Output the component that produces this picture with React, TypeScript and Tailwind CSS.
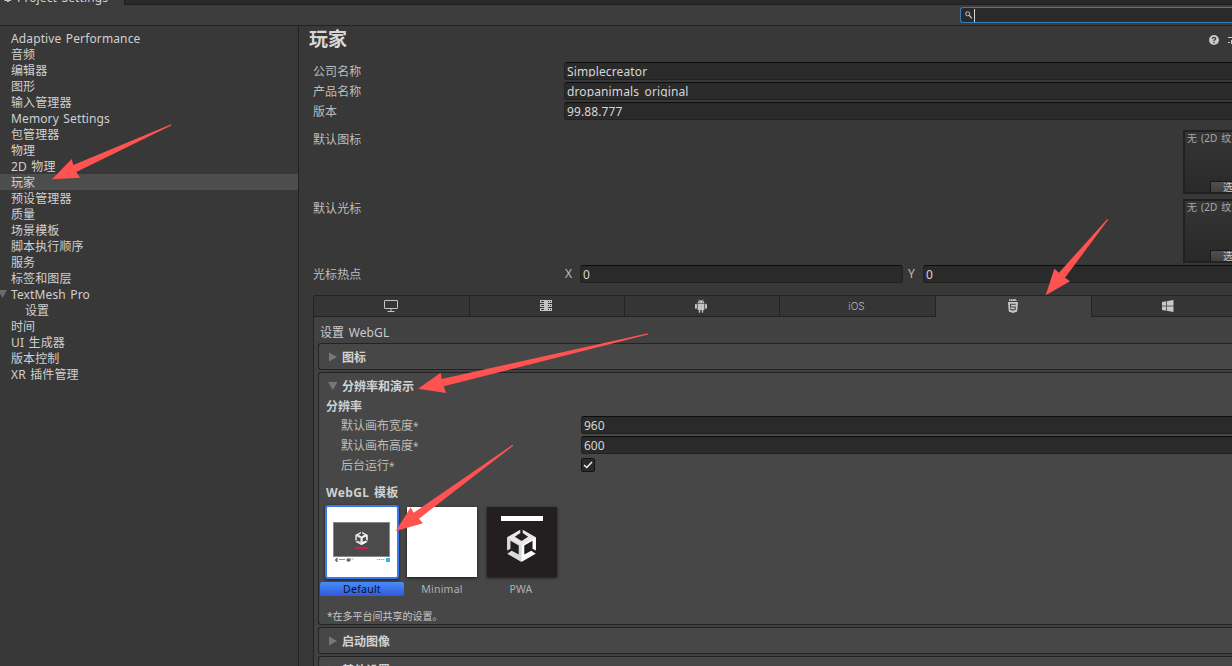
import React from "react";

const sidebarItems: { label: string; indent?: boolean; open?: boolean; selected?: boolean }[] = [
  { label: "Adaptive Performance" },
  { label: "音频" },
  { label: "编辑器" },
  { label: "图形" },
  { label: "输入管理器" },
  { label: "Memory Settings" },
  { label: "包管理器" },
  { label: "物理" },
  { label: "2D 物理" },
  { label: "玩家", selected: true },
  { label: "预设管理器" },
  { label: "质量" },
  { label: "场景模板" },
  { label: "脚本执行顺序" },
  { label: "服务" },
  { label: "标签和图层" },
  { label: "TextMesh Pro", open: true },
  { label: "设置", indent: true },
  { label: "时间" },
  { label: "UI 生成器" },
  { label: "版本控制" },
  { label: "XR 插件管理" },
];

function Sidebar() {
  return (
    <nav className="w-[299px] shrink-0 border-r border-[#232323] pt-1">
      {sidebarItems.map((item) => (
        <div
          key={item.label}
          className={`flex h-4 items-start whitespace-nowrap text-[#d0d0d0] ${item.selected ? "bg-[#4d4d4d]" : ""} ${item.indent ? "pl-[25px]" : ""}`}
        >
          {!item.indent && (
            <span className="flex w-[11px] shrink-0 pt-1">
              {item.open && (
                <svg width="8" height="8" viewBox="0 0 8 8" fill="#6c6c6c">
                  <path d="M-2 0H7L2.5 8Z" />
                </svg>
              )}
            </span>
          )}
          <span className="leading-[18px]">{item.label}</span>
        </div>
      ))}
    </nav>
  );
}

function Field({ value, className = "" }: { value: string; className?: string }) {
  return (
    <div className={`h-[18px] rounded-[3px] border border-[#212121] border-t-[#0d0d0d] bg-[#2a2a2a] pl-0.5 ${className}`}>
      <div className="h-[14px] overflow-hidden whitespace-nowrap leading-[17px] text-[#d6d6d6]">{value}</div>
    </div>
  );
}

function Row({ label, value }: { label: string; value: string }) {
  return (
    <div className="flex h-[18px]">
      <span className="w-[251px] shrink-0 leading-[20px]">{label}</span>
      <Field value={value} className="grow rounded-r-none border-r-0" />
    </div>
  );
}

function TextureRow({ label }: { label: string }) {
  return (
    <div className="flex h-16 justify-between">
      <span className="h-[18px] leading-[20px]">{label}</span>
      <div className="flex w-[49px] flex-col justify-between overflow-hidden border-2 border-r-0 border-[#212121] bg-linear-to-b from-[#353535] to-[#292929] pl-[2px] text-[10px]">
        <span className="whitespace-nowrap leading-3 text-[#a8a8a8]">无 (2D 纹理)</span>
        <span className="ml-[23px] h-[11px] overflow-hidden whitespace-nowrap rounded-tl-[2px] border-l border-t border-[#181818] bg-linear-to-b from-[#505050] to-[#404040] pl-3 leading-[11px] text-[#c4c4c4]">
          选择
        </span>
      </div>
    </div>
  );
}

function MonitorIcon() {
  return (
    <svg width="14" height="12" viewBox="0 0 14 12" fill="none" stroke="#c4c4c4">
      <rect x="0.5" y="0.5" width="13" height="8" rx="0.5" />
      <path d="M7 9V11M3.5 11.5H10.5" />
    </svg>
  );
}

function ServerIcon() {
  return (
    <svg width="12" height="12" viewBox="0 0 12 12" fill="#c4c4c4" shapeRendering="crispEdges">
      <path d="M0 0H12V3H0ZM0 4H12V7H0ZM0 8H12V11H0ZM4 3H8V8H4Z" />
      <path d="M1 1H4V2H1ZM8 1H9V2H8ZM10 1H11V2H10ZM1 5H4V6H1ZM8 5H9V6H8ZM10 5H11V6H10ZM1 9H4V10H1ZM8 9H9V10H8ZM10 9H11V10H10Z" fill="#353535" />
    </svg>
  );
}

function AndroidIcon() {
  return (
    <svg width="12" height="14" viewBox="0 0 12 14" fill="#c4c4c4">
      <path d="M2.6 4.3C2.7 2.8 3.4 2 4.2 1.6L3.5 .4L3.9 .2L4.6 1.4Q6 1 7.4 1.4L8.1 .2L8.5 .4L7.8 1.6C8.6 2 9.3 2.8 9.4 4.3Z" />
      <path d="M2.6 4.8H9.4V11H8.2V13.4Q7.5 14.3 6.8 13.4V11H5.2V13.4Q4.5 14.3 3.8 13.4V11H2.6Z" />
      <rect x="0" y="4.8" width="1.9" height="5" rx=".9" />
      <rect x="10.1" y="4.8" width="1.9" height="5" rx=".9" />
      <path d="M4.1 2.6H4.9V3.4H4.1ZM7.1 2.6H7.9V3.4H7.1Z" fill="#353535" />
    </svg>
  );
}

function Html5Icon() {
  return (
    <svg width="10" height="14" viewBox="0 0 10 14">
      <path d="M1 0H2V.8H3V0H4V.8H4.6V0H7V.7L7.5 0H8V1.2H9V2H1Z" fill="#b4b4b4" />
      <path d="M0 3H10L9.2 12.4L5 14L.8 12.4Z" fill="#c8c8c8" />
      <path d="M7.8 5.2H2.6V8H7.2V10.4L5 11.1L2.6 10.4V9.4" fill="none" stroke="#414141" strokeWidth="1.1" />
    </svg>
  );
}

function WindowsIcon() {
  return (
    <svg width="12" height="12" viewBox="0 0 12 12">
      <path d="M0 2L11.5 0V12L0 10Z" fill="#c8c8c8" />
      <path d="M0 6H12M4.5 0V12" stroke="#454545" strokeWidth="0.8" />
    </svg>
  );
}

const platforms = [
  { id: "desktop", icon: <MonitorIcon />, width: "w-[156px]" },
  { id: "server", icon: <ServerIcon />, width: "w-[155px]" },
  { id: "android", icon: <AndroidIcon />, width: "w-[155px]" },
  { id: "ios", icon: <span className="font-['Inter'] text-[10px] font-light leading-[14px] text-[#b8b8b8]">iOS</span>, width: "w-[156px]" },
  { id: "webgl", icon: <Html5Icon />, width: "w-[156px]" },
  { id: "windows", icon: <WindowsIcon />, width: "w-[154px]" },
];

function PlatformTabs() {
  return (
    <div className="flex h-[22px] w-[932px] shrink-0 bg-[#414141]">
      {platforms.map((p) => (
        <div
          key={p.id}
          className={`flex h-[22px] shrink-0 items-center justify-center border-l border-t border-[#232323] pr-[2px] ${p.width} ${
            p.id === "webgl" ? "bg-[#414141] pb-px" : "border-b bg-[#353535]"
          } ${p.id === "desktop" ? "rounded-tl-[3px]" : ""}`}
        >
          {p.icon}
        </div>
      ))}
    </div>
  );
}

function SectionHeader({ title, open = false }: { title: string; open?: boolean }) {
  return (
    <div className="flex h-[26px] items-center pl-[9px] font-bold text-[#d2d2d2]">
      <svg width="10" height="10" viewBox="0 0 10 10" fill="#777777">
        {open ? <path d="M0 1H9.5L4.8 9Z" /> : <path d="M1 .5L9 5L1 9.5Z" />}
      </svg>
      <span className="ml-1 pt-[2px] leading-4 tracking-normal">{title}</span>
    </div>
  );
}

function UnityMark({ size, dark }: { size: number; dark: string }) {
  return (
    <svg width={size} height={size * 1.12} viewBox="0 0 30 34">
      <path d="M15 1L29 9V25L15 33L1 25V9Z" fill="#e8e8e8" />
      <path d="M15 17L29 9V25L15 33Z" fill="#fff" />
      <path d="M15 17L1 9V25L15 33Z" fill="#dadada" />
      <path d="M13.8 0H16.2V5L21.5 8.6L15 12.8L8.5 8.6L13.8 5Z" fill={dark} />
      <path d="M0 25.5V22.6L4.2 20.4V12.6L12.3 17.2V26L5.4 22.2L1.5 25Z" fill={dark} />
      <path d="M30 25.5V22.6L25.8 20.4V12.6L17.7 17.2V26L24.6 22.2L28.5 25Z" fill={dark} />
    </svg>
  );
}

function Templates() {
  return (
    <div className="flex h-[93px] pl-px text-[10.5px] tracking-[0.25px] text-[#b0b0b0]">
      <div className="flex w-[84px] flex-col items-center">
        <div className="flex h-[74px] w-[74px] flex-col items-center rounded-[3px] border-2 border-[#3b78ee] bg-white pr-px pt-[15px] shadow-[0_1px_3px_#1a1a1a]">
          <div className="flex h-[35px] w-[57px] flex-col items-center border border-[#888] bg-[#4b4b4b] pt-2">
            <UnityMark size={13} dark="#4b4b4b" />
            <div className="mt-px h-[2px] w-[13px] shrink-0 bg-[#d3175c]" />
          </div>
          <svg width="56" height="6" viewBox="0 0 56 6">
            <path d="M1 3L3 1V5ZM3 1V5M5 2.5H11" fill="#666" stroke="#777" strokeWidth=".8" />
            <ellipse cx="14.5" cy="3" rx="2.2" ry="1.8" fill="#666" />
            <path d="M16 2H20M43 2.5H51" stroke="#a8a8a8" strokeDasharray="1.5 .5" />
            <rect x="52" y="1" width="4" height="4" fill="#30b8e0" />
          </svg>
        </div>
        <div className="mt-[3px] h-[14px] w-full rounded-[2px] bg-linear-to-b from-[#498cf7] to-[#3159df] text-center leading-[15px] text-[#101010]">
          Default
        </div>
      </div>
      <div className="ml-[3px] flex w-[70px] flex-col items-center pt-[2px]">
        <div className="h-[70px] w-[70px] bg-white shadow-[0_1px_3px_#1a1a1a]" />
        <span className="mt-[5px] leading-[15px]">Minimal</span>
      </div>
      <div className="ml-[10px] flex w-[70px] flex-col items-center pt-[2px]">
        <div className="flex h-[70px] w-[70px] flex-col items-center bg-[#231f20] pr-px pt-[9px] shadow-[0_1px_3px_#1a1a1a]">
          <div className="h-[5px] w-[42px] shrink-0 bg-white" />
          <div className="mt-[7px]">
            <UnityMark size={31} dark="#231f20" />
          </div>
        </div>
        <span className="mt-[5px] pr-[2px] leading-[15px]">PWA</span>
      </div>
    </div>
  );
}

function ResolutionSection() {
  return (
    <section className="h-[253px] shrink-0 rounded-l-[3px] border border-r-0 border-[#232323] bg-[#474747]">
      <SectionHeader title="分辨率和演示" open />
      <div className="h-[14px] pl-[7px] font-bold leading-[16px] tracking-normal text-[#d0d0d0]">分辨率</div>
      <div className="flex flex-col gap-[2px] pl-[22px] pt-[3px] tracking-normal">
        {[
          ["默认画布宽度", "960"],
          ["默认画布高度", "600"],
        ].map(([label, value]) => (
          <div key={label} className="flex h-[18px]">
            <span className="w-[240px] shrink-0 leading-[20px]">
              {label}
              <span className="text-[10px]">*</span>
            </span>
            <Field value={value} className="grow rounded-r-none border-r-0" />
          </div>
        ))}
        <div className="flex h-[18px] items-center">
          <span className="h-[18px] w-[240px] shrink-0 leading-[20px]">
            后台运行<span className="text-[10px]">*</span>
          </span>
          <span className="flex h-[14px] w-[14px] items-center justify-center rounded-[2px] border border-[#141414] bg-[#2a2a2a]">
            <svg width="10" height="8" viewBox="0 0 10 8" fill="none" stroke="#eeeeee" strokeWidth="1.5">
              <path d="M1 4L3.7 6.5L9 1" />
            </svg>
          </span>
        </div>
      </div>
      <div className="mb-1 mt-[9px] h-[18px] pl-[7px] font-bold leading-[19px] tracking-[0.35px] text-[#d0d0d0]">WebGL 模板</div>
      <Templates />
      <div className="pl-2 pt-[9px] text-[10px] leading-[18px] tracking-normal text-[#c8c8c8]">*在多平台间共享的设置。</div>
    </section>
  );
}

function Arrows() {
  return (
    <svg className="pointer-events-none absolute left-0 top-0" width="1232" height="666" viewBox="0 0 1232 666" fill="#ff5352">
      <path d="M52 179.3L71.7 159L73.3 165L171.2 124.3V125.5L76.3 172L80 177.7Z" />
      <path d="M1045.7 295.3L1054.3 268.7L1059 272.7L1107.3 219L1108.3 219.6L1065 277.7L1070 281.3Z" />
      <path d="M418 388.7L440.7 372.7L441.7 379L648 333.2V334.6L443.7 386.3L446 393Z" />
      <path d="M395.7 531L410.7 507.3L413.7 512.7L512.4 444.8L513.2 445.8L419 518.7L423 523.3Z" />
    </svg>
  );
}

function SearchBar() {
  return (
    <div className="flex h-[21px] shrink-0 items-center justify-end border-b border-[#232323] bg-[#3c3c3c] pb-[1px]">
      <div className="mt-px flex h-4 w-[272px] items-center rounded-l-[3px] border border-r-0 border-[#3a79bb] bg-[#2a2a2a] pl-1">
        <svg width="7" height="8" viewBox="0 0 7 8" fill="none" stroke="#c4c4c4">
          <circle cx="2.7" cy="2.8" r="2" />
          <path d="M4.2 4.4L6.8 7.2" strokeWidth="1.3" />
        </svg>
        <span className="ml-[2px] h-[13px] w-px bg-[#d8d8d8]" />
      </div>
    </div>
  );
}

function HeaderRow() {
  return (
    <div className="flex h-[36px] shrink-0 items-start justify-between pl-[10px]">
      <h1 className="text-[19px] font-bold leading-[27px] tracking-normal text-[#d8d8d8]">玩家</h1>
      <div className="flex items-center gap-[9px] pt-[9px]">
        <svg width="10" height="10" viewBox="0 0 10 10">
          <circle cx="5" cy="5" r="5" fill="#c8c8c8" />
          <path d="M3.3 3.8Q3.5 2.3 5 2.3T6.7 3.7Q6.7 4.6 5 5.3V6.2M5 7.1V8.3" fill="none" stroke="#383838" strokeWidth="1.2" />
        </svg>
        <svg width="4" height="8" viewBox="0 0 4 8" stroke="#c8c8c8" fill="none">
          <path d="M0 1.5H4M0 6.5H2M3.5 4V8" />
        </svg>
      </div>
    </div>
  );
}

function Hotspot() {
  return (
    <div className="mt-[2px] flex h-[18px] shrink-0 pl-[14px]">
      <span className="w-[252px] shrink-0 leading-[19px]">光标热点</span>
      <span className="w-[15px] shrink-0 leading-[17px]">X</span>
      <Field value="0" className="w-[323px] shrink-0" />
      <span className="w-5 shrink-0 pl-[5px] leading-[17px]">Y</span>
      <Field value="0" className="grow rounded-r-none border-r-0" />
    </div>
  );
}

export default function App() {
  return (
    <div className="relative flex h-[666px] w-[1232px] flex-col overflow-hidden bg-[#383838] font-['Noto_Sans','Noto_Sans_CJK_SC',sans-serif] text-xs tracking-[0.12px] text-[#bdbdbd] [word-spacing:1.2px]">
      <div className="flex h-[5px] shrink-0 overflow-hidden bg-[#282828]">
        <div className="flex h-[5px] w-[124px] shrink-0 items-end gap-[5px] overflow-hidden bg-[#3c3c3c] pl-1 text-[#d0d0d0]">
          <svg className="shrink-0 self-start" width="8" height="3" viewBox="0 0 8 3" fill="#c8c8c8">
            <path d="M0 0H8L6 1H5V2H3V1H1Z" />
          </svg>
          <span className="whitespace-nowrap leading-[15px]">Project Settings</span>
        </div>
        <div className="grow border-b border-l border-[#1e1e1e]" />
      </div>
      <SearchBar />
      <div className="flex min-h-0 grow">
        <Sidebar />
        <main className="flex min-w-0 grow flex-col overflow-hidden">
          <HeaderRow />
          <div className="flex shrink-0 flex-col gap-[2px] pl-[14px]">
            <Row label="公司名称" value="Simplecreator" />
            <Row label="产品名称" value="dropanimals_original" />
            <Row label="版本" value="99.88.777" />
          </div>
          <div className="mt-[10px] flex shrink-0 flex-col gap-[5px] pl-[14px]">
            <TextureRow label="默认图标" />
            <TextureRow label="默认光标" />
          </div>
          <Hotspot />
          <div className="ml-[14px] mt-3 flex grow flex-col">
            <PlatformTabs />
            <div className="flex grow flex-col border-l border-[#232323] bg-[#414141] pl-1">
              <div className="h-[26px] shrink-0 pl-[2px] pt-[7px] leading-[18px] text-[#cccccc]">设置 WebGL</div>
              <div className="flex flex-col gap-[2px]">
                <section className="h-[27px] shrink-0 rounded-l-[3px] border border-r-0 border-[#232323] bg-[#474747]">
                  <SectionHeader title="图标" />
                </section>
                <ResolutionSection />
                <section className="h-[27px] shrink-0 rounded-l-[3px] border border-r-0 border-[#232323] bg-[#474747]">
                  <SectionHeader title="启动图像" />
                </section>
                <section className="h-[27px] shrink-0 rounded-l-[3px] border border-r-0 border-[#232323] bg-[#474747]">
                  <SectionHeader title="其他设置" />
                </section>
              </div>
            </div>
          </div>
        </main>
      </div>
      <Arrows />
    </div>
  );
}
